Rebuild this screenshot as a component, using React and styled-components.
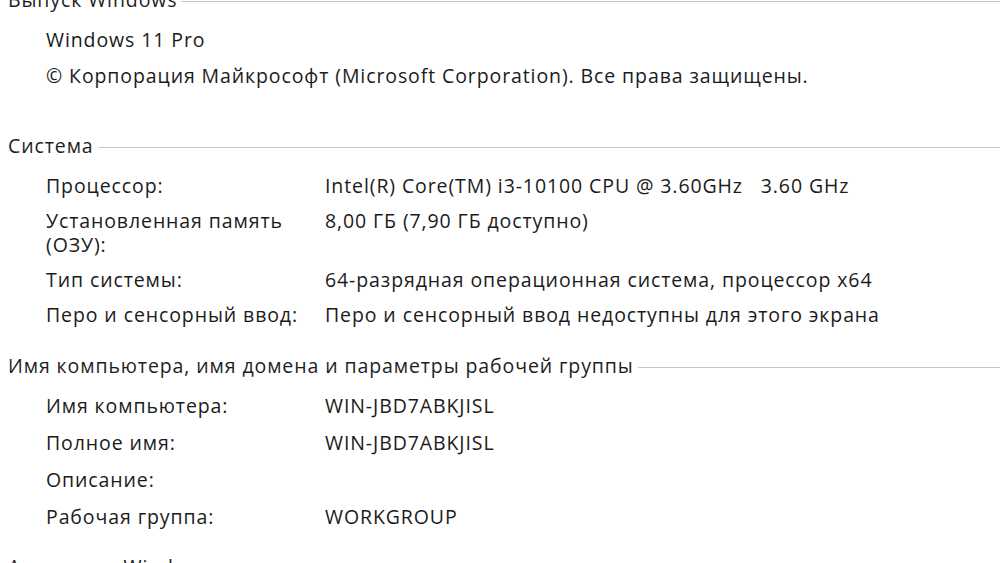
import React from 'react';
import styled, { createGlobalStyle } from 'styled-components';

const GlobalStyle = createGlobalStyle`
  html, body {
    margin: 0;
    padding: 0;
    background: #ffffff;
    overflow: hidden;
  }
  body {
    font-family: "Open Sans", "Noto Sans", "DejaVu Sans", sans-serif;
    color: #1b1b1b;
  }
`;

const sections = [
  {
    title: 'Выпуск Windows',
    space: 46,
    gap: 12,
    rows: [
      { text: 'Windows 11 Pro' },
      { text: '© Корпорация Майкрософт (Microsoft Corporation). Все права защищены.' },
    ],
  },
  {
    title: 'Система',
    space: 27,
    gap: 11,
    rows: [
      { label: 'Процессор:', value: 'Intel(R) Core(TM) i3-10100 CPU @ 3.60GHz   3.60 GHz' },
      { label: 'Установленная память (ОЗУ):', value: '8,00 ГБ (7,90 ГБ доступно)' },
      { label: 'Тип системы:', value: '64-разрядная операционная система, процессор x64' },
      { label: 'Перо и сенсорный ввод:', value: 'Перо и сенсорный ввод недоступны для этого экрана' },
    ],
  },
  {
    title: 'Имя компьютера, имя домена и параметры рабочей группы',
    space: 26,
    gap: 13,
    rows: [
      { label: 'Имя компьютера:', value: 'WIN-JBD7ABKJISL' },
      { label: 'Полное имя:', value: 'WIN-JBD7ABKJISL' },
      { label: 'Описание:', value: '' },
      { label: 'Рабочая группа:', value: 'WORKGROUP' },
    ],
  },
  {
    title: 'Активация Windows',
    space: 0,
    gap: 12,
    rows: [],
  },
];

function App() {
  return (
    <>
      <GlobalStyle />
      <Page>
        {sections.map((s) => (
          <Section key={s.title} $space={s.space}>
            <Header>
              <HeaderText>{s.title}</HeaderText>
              <Rule />
            </Header>
            {s.rows.length > 0 && (
              <Rows $gap={s.gap}>
                {s.rows.map((r, i) =>
                  r.label === undefined ? (
                    <Full key={i}>{r.text}</Full>
                  ) : (
                    <React.Fragment key={i}>
                      <Label>{r.label}</Label>
                      <Value>{r.value}</Value>
                    </React.Fragment>
                  )
                )}
              </Rows>
            )}
          </Section>
        ))}
      </Page>
    </>
  );
}

const Page = styled.div`
  width: 1000px;
  height: 576px;
  overflow: hidden;
  box-sizing: border-box;
  padding-left: 8px;
  margin-top: -13px;
  padding-top: 1px;
  font-size: 19.5px;
  letter-spacing: 0.9px;
  line-height: 24px;
`;

const Section = styled.section`
  margin-bottom: ${(p) => p.$space}px;
`;

const Header = styled.div`
  display: flex;
  align-items: center;
  gap: 4px;
  height: 24px;
`;

const HeaderText = styled.span`
  white-space: nowrap;
  color: #1e1e1e;
`;

const Rule = styled.div`
  flex: 1;
  height: 1px;
  margin-top: 2px;
  background: #c6c6c6;
`;

const Rows = styled.div`
  display: grid;
  grid-template-columns: 279px 1fr;
  row-gap: ${(p) => p.$gap}px;
  padding-left: 38px;
  margin-top: 16px;
`;

const Label = styled.div`
  padding-right: 8px;
`;

const Value = styled.div`
  white-space: pre;
`;

const Full = styled.div`
  grid-column: 1 / -1;
`;

export default App;
